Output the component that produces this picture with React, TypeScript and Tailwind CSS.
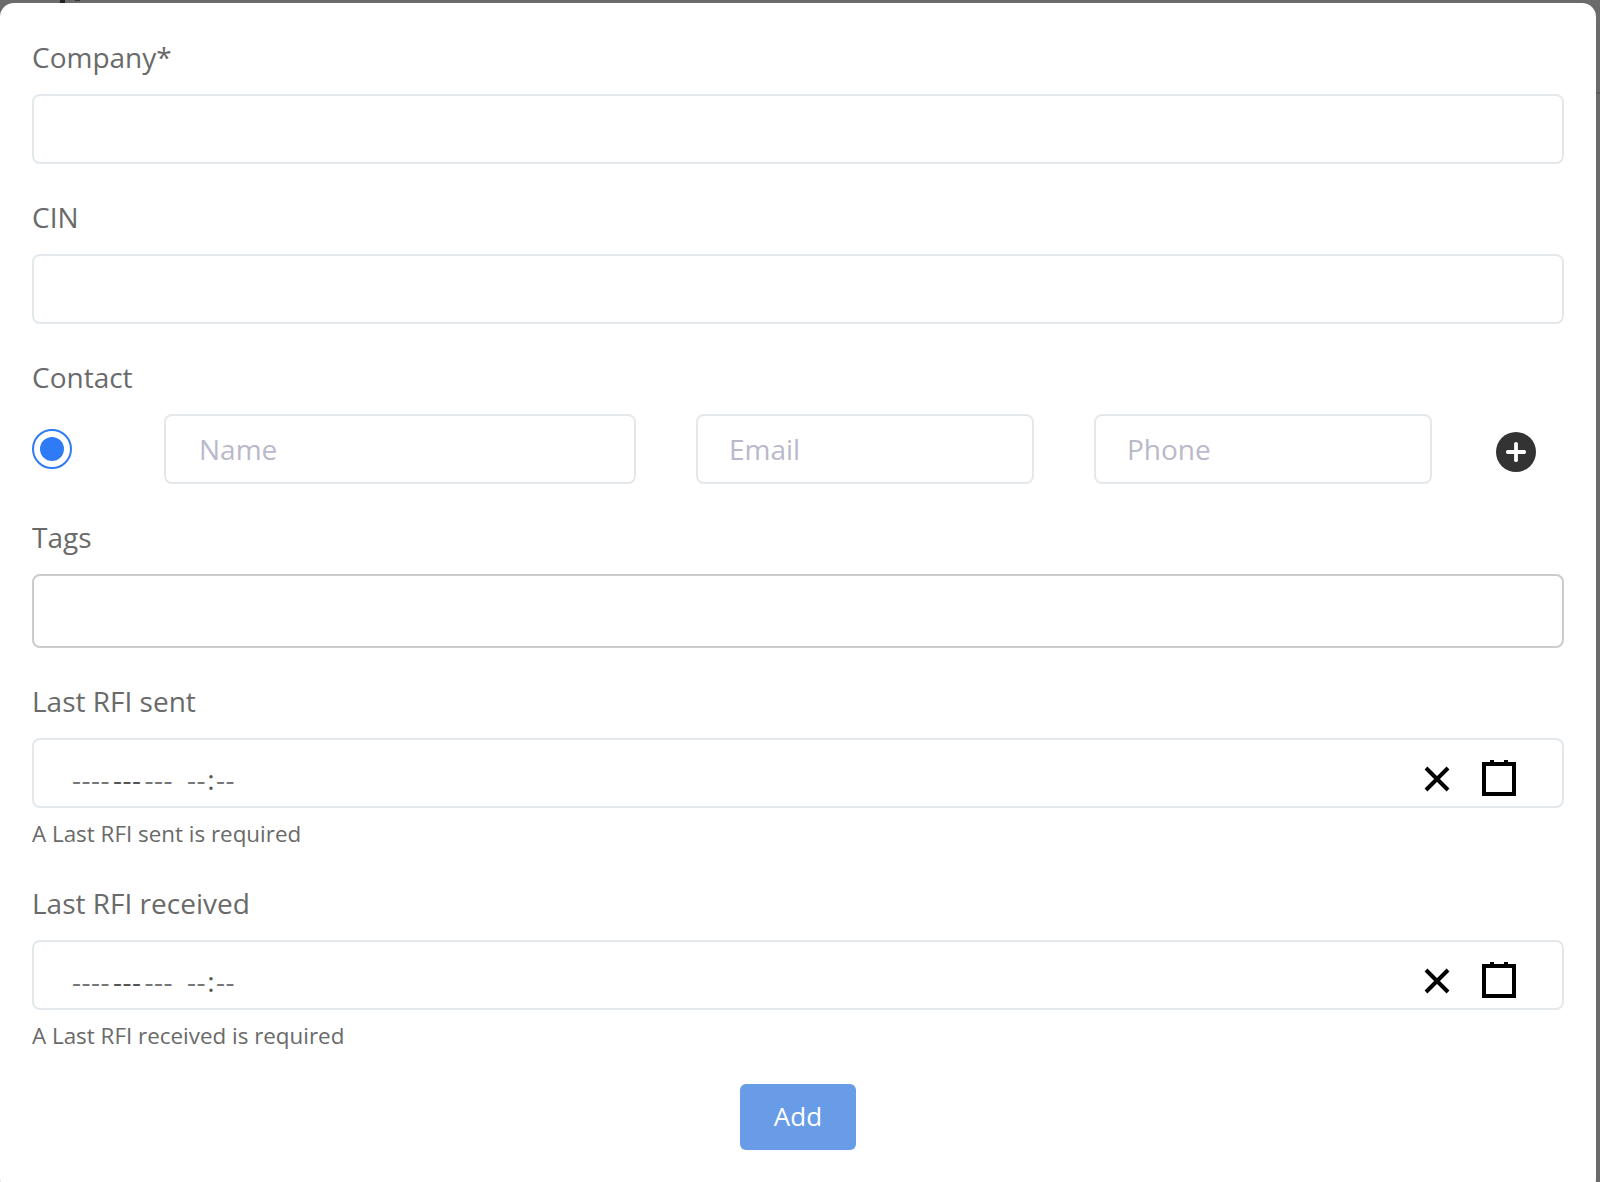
import { Plus } from "lucide-react";

const labelCls = "block h-[38px] mb-[17px] text-[28px] leading-[36px] text-[#6a6a6a]";
const inputCls =
  "block h-[70px] rounded-lg border-2 border-[#e2e8ec] bg-white px-[32px] text-[28px] text-[#666666] outline-none placeholder:text-[#b9b9cb]";

function DateField({ label }: { label: string }) {
  return (
    <div>
      <label className={labelCls}>{label}</label>
      <div className="flex h-[70px] items-center rounded-lg border-2 border-[#e2e8ec] pl-[38px] pr-[46px]">
        <div className="flex flex-1 items-center pt-[12px] text-[28px] leading-none tracking-[0.5px] text-[#777777]">
          <span>----</span>
          <span className="ml-[3px] text-[#555555]">---</span>
          <span className="ml-[3px]">---</span>
          <span className="ml-[14px]">--</span>
          <span className="mx-[1px] text-[#555555]">:</span>
          <span>--</span>
        </div>
        <svg width="30" height="30" viewBox="0 0 30 30" className="mr-[30px] mt-[12px] text-black">
          <path d="M4 4 L26 26 M26 4 L4 26" stroke="currentColor" strokeWidth="4" fill="none" />
        </svg>
        <svg width="34" height="36" viewBox="0 0 34 36" className="mt-[10px] text-black">
          <path d="M2 4 H32 V34 H2 Z" stroke="currentColor" strokeWidth="4" fill="none" />
          <path d="M10 0 V4 M24 0 V4" stroke="currentColor" strokeWidth="4" fill="none" />
        </svg>
      </div>
      <p className="mt-[10px] h-[31px] text-[22.4px] leading-[31px] text-[#6a6a6a]">A {label} is required</p>
    </div>
  );
}

export default function App() {
  return (
    <div className="relative h-[1182px] w-[1600px] overflow-hidden bg-[#6b6b6b] pr-[4px] pt-[3px] font-['Open_Sans',sans-serif]">
      {/* bits of the page behind the overlay */}
      <span className="absolute left-[60px] top-0 h-[3px] w-[5px] bg-[#222222]" />
      <span className="absolute left-[75px] top-0 h-[1px] w-[5px] bg-[#333333]" />
      <span className="absolute right-0 top-[92px] h-[2px] w-[4px] bg-[#5c5c5c]" />
      <div className="h-[1190px] rounded-[14px] bg-white px-[32px] pt-[36px]">
        <div className="mb-[35px]">
          <label className={labelCls}>Company*</label>
          <input className={`${inputCls} w-full`} />
        </div>
        <div className="mb-[35px]">
          <label className={labelCls}>CIN</label>
          <input className={`${inputCls} w-full`} />
        </div>
        <div className="mb-[35px]">
          <label className={labelCls}>Contact</label>
          <div className="flex items-center">
            <span className="flex h-[40px] w-[40px] items-center justify-center rounded-full border-2 border-[#2f7bf6]">
              <span className="h-[24px] w-[24px] rounded-full bg-[#2f7bf6]" />
            </span>
            <input placeholder="Name" className={`${inputCls} ml-[92px] w-[472px] pl-[33px]`} />
            <input placeholder="Email" className={`${inputCls} ml-[60px] w-[338px] pl-[31px]`} />
            <input placeholder="Phone" className={`${inputCls} ml-[60px] w-[338px] pl-[31px]`} />
            <span className="ml-[64px] mt-[6px] flex h-[40px] w-[40px] items-center justify-center rounded-full bg-[#333333] text-white">
              <Plus size={28} strokeWidth={3.8} absoluteStrokeWidth />
            </span>
          </div>
        </div>
        <div className="mb-[35px]">
          <label className={labelCls}>Tags</label>
          <input className="block h-[74px] w-full rounded-lg border-2 border-[#cccccc] bg-white outline-none" />
        </div>
        <div className="mb-[36px]">
          <DateField label="Last RFI sent" />
        </div>
        <DateField label="Last RFI received" />
        <div className="mt-[33px] flex justify-center">
          <button className="h-[66px] w-[116px] rounded-md bg-[#699ce6] pb-[2px] text-[26px] text-white">Add</button>
        </div>
      </div>
    </div>
  );
}
